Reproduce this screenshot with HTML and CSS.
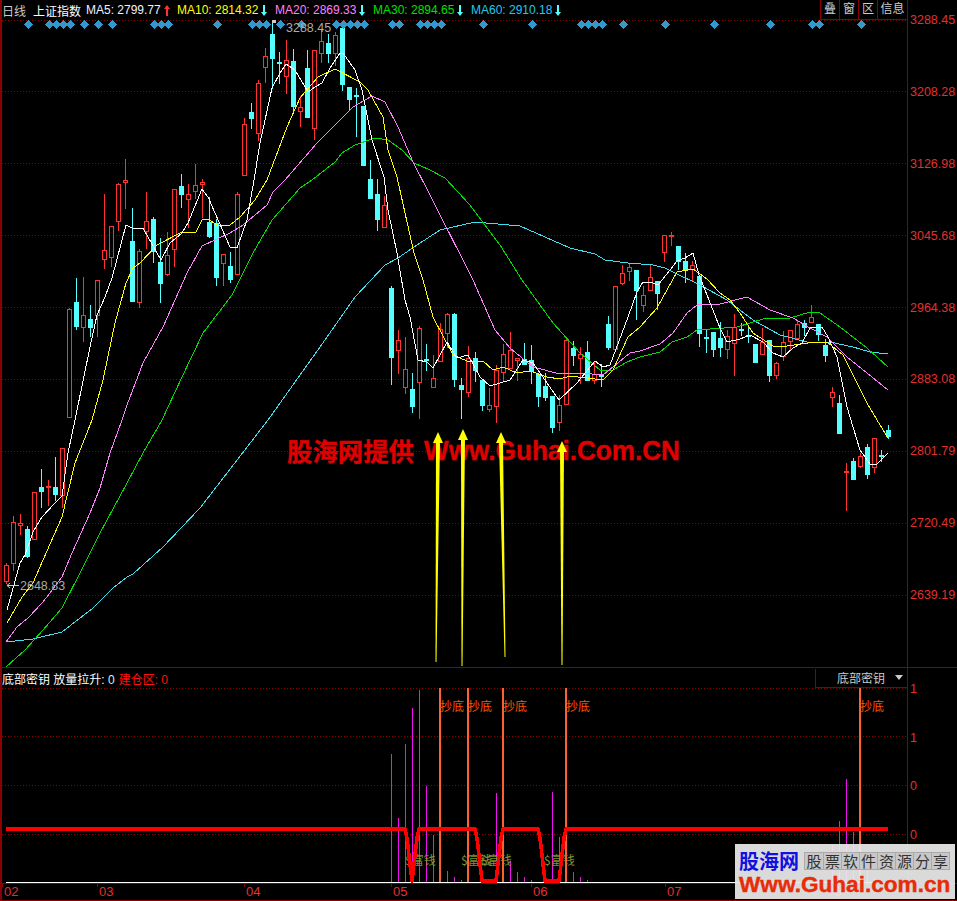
FILE: index.html
```html
<!DOCTYPE html>
<html lang="zh">
<head>
    <title>上证指数 日线</title>
    <meta charset="UTF-8">
    <link rel="stylesheet" href="styles.css">
</head>
<body>
  <div class="terminal">

    <div class="price-panel">
      <div class="title-bar">
        <span class="period">日线</span>
        <span class="symbol">上证指数</span>
        <span class="ma ma5">MA5: 2799.77<svg class="trend" viewBox="0 0 6 11"><path class="up" d="M3 0 L6 4 H4 V11 H2 V4 H0 Z"/></svg></span>
        <span class="ma ma10">MA10: 2814.32<svg class="trend" viewBox="0 0 6 11"><path class="down" d="M2 0 H4 V7 H6 L3 11 L0 7 H2 Z"/></svg></span>
        <span class="ma ma20">MA20: 2869.33<svg class="trend" viewBox="0 0 6 11"><path class="down" d="M2 0 H4 V7 H6 L3 11 L0 7 H2 Z"/></svg></span>
        <span class="ma ma30">MA30: 2894.65<svg class="trend" viewBox="0 0 6 11"><path class="down" d="M2 0 H4 V7 H6 L3 11 L0 7 H2 Z"/></svg></span>
        <span class="ma ma60">MA60: 2910.18<svg class="trend" viewBox="0 0 6 11"><path class="down" d="M2 0 H4 V7 H6 L3 11 L0 7 H2 Z"/></svg></span>
        <div class="tool-buttons">
          <span class="tool">叠</span>
          <span class="tool">窗</span>
          <span class="tool">区</span>
          <span class="tool wide">信息</span>
        </div>
      </div>
      <svg id="priceChart" class="chart" width="905" height="647" viewBox="2 20 905 647"></svg>
    </div>

    <div class="price-axis">
      <span>3288.45</span>
      <span>3208.28</span>
      <span>3126.98</span>
      <span>3045.68</span>
      <span>2964.38</span>
      <span>2883.08</span>
      <span>2801.79</span>
      <span>2720.49</span>
      <span>2639.19</span>
    </div>

    <div class="signal-panel">
      <div class="sub-bar">
        <span>底部密钥 放量拉升: <b class="zero">0</b></span>
        <span class="red">建仓区: 0</span>
        <div class="indicator-select">
          <span>底部密钥</span>
          <i class="caret"></i>
        </div>
      </div>
      <svg id="signalChart" class="chart" width="905" height="195" viewBox="2 688 905 195"></svg>
    </div>

    <div class="signal-axis">
      <span>1</span>
      <span>1</span>
      <span>0</span>
      <span>0</span>
    </div>

    <svg id="dateAxis" class="date-axis" width="955" height="16" viewBox="2 884 955 16"></svg>

  </div>

  <div class="site-badge">
    <div class="badge-top">
      <span class="badge-name">股海网</span>
      <div class="badge-cells">
        <span>股</span><span>票</span><span>软</span><span>件</span><span>资</span><span>源</span><span>分</span><span>享</span>
      </div>
    </div>
    <div class="badge-url">Www.Guhai.com.cn</div>
  </div>

  <script src="chart.js"></script>
</body>
</html>
```

FILE: styles.css
```css
* {
    box-sizing: border-box;
}

html, body {
    margin: 0;
    padding: 0;
    background-color: black;
}

body {
    position: relative;
    width: 957px;
    height: 901px;
    overflow: hidden;
    font-family: "Liberation Sans", "Noto Sans CJK SC", sans-serif;
    font-size: 12px;
}

.terminal {
    width: 957px;
    height: 901px;
    border-left: 2px solid #8b0000;
    display: grid;
    grid-template-columns: 905px 50px;
    grid-template-rows: 667px 216px 18px;
}

.chart {
    display: block;
}

/* top panel */
.title-bar {
    height: 20px;
    display: flex;
    align-items: center;
    white-space: nowrap;
    font-size: 12px;
}

.period {
    color: #ccc;
    font-size: 12px;
    width: 31px;
}

.symbol {
    color: white;
    width: 53px;
}

.ma {
    width: 98px;
    display: flex;
    align-items: center;
}

.ma5 { color: #f0f0ff; width: 91px; }
.ma10 { color: #ffff00; }
.ma20 { color: #ff80ff; }
.ma30 { color: #00e000; }
.ma60 { color: #20c8f0; }

.trend {
    width: 6px;
    height: 11px;
    margin-left: 3px;
}

.trend .up { fill: #ff3232; }
.trend .down { fill: #54ffff; }

.tool-buttons {
    margin-left: auto;
    display: flex;
    height: 20px;
    border-bottom: 1px solid #8b0000;
}

.tool {
    width: 19px;
    border-left: 1px solid #8b0000;
    color: #ccc;
    font-size: 12px;
    line-height: 19px;
    text-align: center;
}

.tool.wide {
    width: 30px;
}

.price-axis {
    border-left: 1px solid #8b0000;
    padding: 13px 0 0 2px;
    display: flex;
    flex-direction: column;
    gap: 57.9px;
    color: #e03030;
    font-size: 12.5px;
    line-height: 14px;
}

/* bottom panel */
.signal-panel {
    border-top: 1px solid #8b0000;
}

.sub-bar {
    height: 20px;
    display: flex;
    align-items: center;
    gap: 4px;
    color: white;
    white-space: nowrap;
}

.sub-bar .zero {
    color: #d8ecff;
    font-weight: normal;
}

.red {
    color: #ff1010;
}

.indicator-select {
    margin-left: auto;
    width: 92px;
    height: 19px;
    border-left: 1px solid #8b0000;
    border-bottom: 1px solid #8b0000;
    display: flex;
    align-items: center;
    justify-content: flex-end;
    gap: 10px;
    padding-right: 4px;
    color: #ccc;
}

.caret {
    width: 0;
    height: 0;
    border-left: 4px solid transparent;
    border-right: 4px solid transparent;
    border-top: 5px solid #ccc;
}

.signal-axis {
    border-top: 1px solid #8b0000;
    border-left: 1px solid #8b0000;
    padding: 14px 0 0 2px;
    display: flex;
    flex-direction: column;
    gap: 34.67px;
    color: #e03030;
    font-size: 12.5px;
    line-height: 14px;
}

.date-axis {
    grid-column: 1 / 3;
    display: block;
    width: 955px;
    height: 18px;
    border-top: 1px solid #8b0000;
    border-bottom: 1px solid #8b0000;
}

/* svg text */
.date-text {
    fill: #e03030;
    font-size: 13px;
}

.mark-text {
    fill: #aaa;
    font-size: 12.5px;
}

.watermark {
    fill: #e00000;
    stroke: #e00000;
    stroke-width: 0.3px;
    font-size: 25.4px;
    font-weight: bold;
    font-family: "Noto Sans CJK SC", sans-serif;
}

.watermark-url {
    fill: #e00000;
    stroke: #e00000;
    stroke-width: 0.3px;
    font-size: 27px;
    font-weight: bold;
}

.buy-text {
    fill: #ff5000;
    font-size: 12px;
    font-family: "Noto Sans CJK SC", sans-serif;
}

.money-text {
    fill: #7f9030;
    font-size: 12px;
    font-family: "Noto Sans CJK SC", sans-serif;
}

/* logo over the corner */
.site-badge {
    position: absolute;
    left: 735px;
    top: 844px;
    width: 220px;
    height: 55px;
    padding: 5px 4px 0 4px;
    background-color: rgba(235, 235, 235, 0.93);
}

.badge-top {
    display: flex;
    align-items: center;
    justify-content: space-between;
}

.badge-name {
    color: #1010e0;
    font-size: 20px;
    font-weight: bold;
    line-height: 24px;
    font-family: "Noto Sans CJK SC", sans-serif;
}

.badge-cells {
    display: flex;
    background-color: #c8c8c8;
    border: 1px solid #aaa;
    margin-right: 1px;
}

.badge-cells span {
    width: 18px;
    height: 16px;
    line-height: 16px;
    border-left: 1px solid #aaa;
    text-align: center;
    color: #333;
    font-size: 15px;
    font-family: "Noto Sans CJK SC", sans-serif;
}

.badge-cells span:first-child {
    border-left: none;
}

.badge-url {
    color: #e82c08;
    font-size: 22.6px;
    font-weight: bold;
    line-height: 22px;
    margin-top: 1px;
    -webkit-text-stroke: 0.4px #e82c08;
}
```

FILE: chart.js
```javascript
const SVG_NS = "http://www.w3.org/2000/svg";

// kind, high, body top, body bottom, low (all in pixel rows), one candle every 7px from x=6
const candles = [
  ["r",563,565,581,583],["r",516,522,563,570],["r",514,523,525,534],["c",526,529,556,557],
  ["r",492,492,539,539],["c",469,487,491,507],["r",480,486,487,505],["c",457,487,494,500],
  ["r",448,448,495,507],["r",308,309,417,417],["c",278,302,326,329],["r",277,315,327,341],
  ["c",305,319,327,336],["r",280,280,315,336],["r",194,250,259,268],["r",226,226,257,266],
  ["r",183,184,221,230],["r",159,180,182,208],["c",208,241,301,301],["r",249,251,302,307],
  ["r",192,221,231,248],["c",217,219,251,262],["c",238,262,283,302],["r",232,255,274,275],
  ["r",189,189,249,266],["c",174,186,194,207],["r",184,194,199,227],["r",164,185,191,198],
  ["r",179,182,184,217],["c",197,222,236,237],["c",219,223,277,285],["r",254,254,263,285],
  ["c",252,266,279,282],["r",192,194,274,274],["r",118,124,175,175],["c",103,112,118,128],
  ["r",80,83,133,140],["r",48,56,67,82],["c",20,34,58,88],["c",52,62,63,83],
  ["r",40,60,76,93],["c",49,61,106,110],["r",96,107,111,126],["c",50,68,117,117],
  ["r",50,50,128,139],["r",30,41,53,62],["c",34,43,53,62],["r",32,35,53,65],
  ["c",28,28,84,90],["c",87,87,99,109],["c",88,95,96,136],["c",106,106,165,165],
  ["c",160,179,198,198],["c",179,194,219,230],["r",196,205,227,227],["c",286,288,357,384],
  ["r",330,340,350,373],["r",337,369,387,393],["c",373,389,406,412],["r",326,328,382,418],
  ["c",344,359,360,370],["r",355,378,387,387],["r",323,329,361,361],["r",313,314,333,347],
  ["c",313,314,379,386],["c",378,385,389,418],["r",346,358,392,396],["c",352,358,370,381],
  ["c",380,380,405,410],["r",388,405,409,411],["r",365,370,406,422],["r",344,354,372,380],
  ["r",332,350,368,368],["r",358,358,360,380],["c",343,359,364,364],["c",345,360,371,383],
  ["c",374,374,396,406],["c",373,386,397,400],["c",396,396,427,432],["r",395,405,422,430],
  ["r",339,340,404,404],["c",341,348,355,365],["r",347,354,358,383],["c",341,352,380,380],
  ["r",362,374,380,383],["c",364,375,376,386],["c",316,324,347,349],["r",286,286,349,349],
  ["r",265,273,283,284],["r",263,267,271,280],["c",270,270,290,319],["r",286,295,305,311],
  ["r",265,277,290,290],["c",281,281,293,309],["r",235,235,252,261],["r",232,235,236,245],
  ["c",246,246,261,269],["c",253,261,269,282],["r",261,265,269,280],["c",276,276,333,346],
  ["c",330,337,338,352],["c",332,332,349,356],["c",322,338,347,356],["r",330,336,349,358],
  ["r",314,327,343,375],["c",323,329,330,335],["c",326,335,336,342],["c",344,344,362,362],
  ["r",328,342,354,354],["c",340,340,375,381],["r",362,363,375,378],["r",331,342,356,360],
  ["r",330,330,341,349],["r",320,324,338,338],["c",320,323,327,335],["r",305,317,322,322],
  ["c",324,324,334,340],["c",339,345,355,361],["r",387,392,397,406],["c",395,403,433,433],
  ["r",463,471,472,510],["c",458,461,479,479],["r",453,456,466,467],["c",444,447,474,478],
  ["r",438,438,467,472],["c",450,455,456,461],["c",425,430,436,438]
];

const maLines = [
  { color: "#40e0f0", points: "6,642 33,639 62,632 93,608 113,588 127,577 133,574 163,547 200,508 268,420 320,347 355,297 385,265 398,258 414,247 440,230 475,222 520,226 570,248 595,254 605,260 628,263 653,265 665,268 673,272 700,285 727,300 753,320 780,335 807,342 830,342 853,347 870,352 888,354" },
  { color: "#00e000", points: "6,667 25,650 43,630 62,608 80,573 100,533 127,483 143,453 162,420 182,377 203,333 232,295 253,253 272,220 300,188 312,180 335,162 342,153 355,145 375,138 388,140 402,150 414,163 430,170 445,178 470,205 500,245 522,280 553,323 580,353 600,370 613,370 627,362 640,357 660,352 672,342 687,337 697,330 737,327 763,319 790,318 810,312 820,313 840,327 867,348 888,367" },
  { color: "#ff80ff", points: "6,642 17,627 28,618 43,602 62,577 72,553 90,513 100,488 110,453 122,420 127,405 143,363 163,327 187,273 202,246 230,233 243,225 267,205 273,192 285,180 317,143 337,123 353,107 372,96 385,102 398,127 413,162 430,195 473,280 495,330 510,348 533,367 560,374 580,373 603,375 630,353 640,351 660,344 673,333 687,313 697,305 720,304 747,297 770,310 793,318 810,328 827,337 847,357 867,373 888,390" },
  { color: "#ffff00", points: "7,623 22,597 33,583 43,560 62,517 75,463 92,420 103,380 115,323 126,283 133,268 140,263 157,245 182,232 196,232 202,220 208,219 217,225 230,225 240,217 255,200 267,180 287,127 300,98 318,77 335,69 360,82 368,90 383,117 388,150 397,177 405,213 414,253 423,280 433,317 453,355 467,361 483,361 493,370 503,367 517,373 530,371 547,377 560,379 570,376 603,380 613,370 628,337 640,327 657,308 677,272 693,269 707,279 720,293 730,300 740,313 753,333 773,346 787,346 815,342 827,342 843,355 867,403 877,420 888,438" },
  { color: "#ffffff", points: "7,610 20,563 25,555 33,532 42,517 55,503 62,496 68,453 75,420 90,347 97,315 105,297 112,278 126,225 132,228 143,228 148,237 161,260 170,243 182,233 188,223 202,189 208,197 230,247 237,248 247,220 254,180 260,143 272,88 280,73 286,64 295,70 308,92 315,87 322,83 330,68 340,53 343,53 355,70 362,90 372,140 384,177 388,210 397,253 405,300 410,317 418,360 427,362 433,368 447,342 457,358 468,355 480,377 490,386 500,383 510,380 523,360 533,363 547,383 559,400 577,383 595,361 603,367 610,365 628,317 637,292 643,282 650,282 658,285 670,270 677,261 685,258 693,253 699,275 707,295 720,328 727,342 740,339 750,335 763,342 773,353 783,357 793,348 802,343 810,328 822,327 828,337 837,357 847,407 860,450 870,464 877,464 888,453" }
];

const diamonds = [28,49,56,63,70,84,98,112,154,161,168,217,252,259,266,280,301,336,343,350,357,364,392,399,420,427,434,441,483,532,581,588,595,602,623,665,714,770,812,819,861];

// x, top of the magenta bars in the bottom panel
const volumeBars = [[391,754],[398,818],[405,744],[412,708],[419,690],[426,786],[433,835],[447,871],[454,877],[461,880],[496,793],[510,861],[517,872],[524,877],[531,880],[552,792],[559,837],[573,872],[580,877],[587,880],[832,845],[839,821],[846,779],[853,832],[867,870],[874,877]];

function add(parent, tag, attrs, text) {
    const el = document.createElementNS(SVG_NS, tag);
    for (const name in attrs) {
        el.setAttribute(name, attrs[name]);
    }
    if (text) {
        el.textContent = text;
    }
    parent.appendChild(el);
    return el;
}

function gridLine(svg, y, x2) {
    add(svg, "line", { x1: 2, y1: y + 0.5, x2: x2, y2: y + 0.5, stroke: "#8b0000", "stroke-dasharray": "1 2" });
}

function yellowArrow(svg, tipX, tipY, endX, endY) {
    const shaft = [tipX - 2, tipY + 9, tipX + 2, tipY + 9, endX + 0.5, endY, endX - 0.5, endY];
    const head = [tipX, tipY, tipX + 5, tipY + 11, tipX - 5, tipY + 11];
    add(svg, "polygon", { points: shaft.join(" "), fill: "#ffff00" });
    add(svg, "polygon", { points: head.join(" "), fill: "#ffff00" });
}

function drawPriceChart() {
    const svg = document.getElementById("priceChart");
    [20, 91, 163, 235, 307, 379, 451, 523, 595].forEach(y => gridLine(svg, y, 907));

    candles.forEach((c, i) => {
        const x = 6 + i * 7;
        const color = c[0] === "r" ? "#ff3232" : "#54ffff";
        add(svg, "rect", { x: x, y: c[1], width: 1, height: c[4] - c[1] + 1, fill: color, "shape-rendering": "crispEdges" });
        if (c[0] === "r") {
            add(svg, "rect", { x: x - 1.5, y: c[2] + 0.5, width: 4, height: Math.max(c[3] - c[2], 1), fill: "black", stroke: color, "shape-rendering": "crispEdges" });
        } else {
            add(svg, "rect", { x: x - 2, y: c[2], width: 5, height: c[3] - c[2] + 1, fill: color, "shape-rendering": "crispEdges" });
        }
    });

    maLines.forEach(ma => {
        add(svg, "polyline", { points: ma.points, fill: "none", stroke: ma.color, "stroke-width": 1, "shape-rendering": "crispEdges" });
    });

    diamonds.forEach(x => {
        add(svg, "polygon", { points: `${x - 4.5},24.5 ${x},20 ${x + 4.5},24.5 ${x},29`, fill: "#3399cc", "shape-rendering": "crispEdges" });
    });

    add(svg, "rect", { x: 272, y: 20, width: 4, height: 3, fill: "#ccc" });
    add(svg, "text", { x: 286, y: 32, class: "mark-text" }, "3288.45");
    add(svg, "path", { d: "M7 585.5 H19 M7 585.5 L10 583 M7 585.5 L10 588", stroke: "#ccc", fill: "none" });
    add(svg, "text", { x: 20, y: 590, class: "mark-text" }, "2648.83");

    add(svg, "text", { x: 287, y: 461, class: "watermark" }, "股海网提供");
    add(svg, "text", { x: 424, y: 460, class: "watermark-url", textLength: 256, lengthAdjust: "spacingAndGlyphs" }, "Www.Guhai.Com.CN");

    yellowArrow(svg, 438, 432, 436, 662);
    yellowArrow(svg, 463, 429, 462, 666);
    yellowArrow(svg, 501, 432, 505, 657);
    yellowArrow(svg, 562, 441, 562, 665);
}

function drawSignalChart() {
    const svg = document.getElementById("signalChart");
    [688, 736, 785, 834].forEach(y => gridLine(svg, y, 907));

    add(svg, "rect", { x: 6, y: 882, width: 882, height: 1, fill: "white" });

    volumeBars.forEach(b => {
        add(svg, "rect", { x: b[0], y: b[1], width: 1, height: 882 - b[1], fill: "#f010f0" });
    });

    [405, 461, 481, 544].forEach(x => {
        add(svg, "text", { x: x, y: 865, class: "money-text" }, "$富钱");
    });

    [440, 468, 503, 566, 860].forEach(x => {
        add(svg, "rect", { x: x - 1, y: 688, width: 2, height: 194, fill: "#ff6030" });
        add(svg, "text", { x: x, y: 711, class: "buy-text" }, "抄底");
    });

    add(svg, "polyline", {
        points: "6,829 405,829 407,838 412,881 417,838 419,829 475,829 477,838 482,881 496,881 501,838 503,829 538,829 540,838 545,881 559,881 564,838 566,829 888,829",
        fill: "none", stroke: "#ff0000", "stroke-width": 3.6, "stroke-linejoin": "round", "shape-rendering": "crispEdges"
    });
}

function drawDateAxis() {
    const svg = document.getElementById("dateAxis");
    [["02", 2], ["03", 97], ["04", 244], ["05", 391], ["06", 531], ["07", 665], ["08", 825]].forEach(d => {
        add(svg, "rect", { x: d[1], y: 884, width: 1, height: 3, fill: "#8b0000" });
        add(svg, "text", { x: d[1] + 2, y: 896, class: "date-text" }, d[0]);
    });
}

drawPriceChart();
drawSignalChart();
drawDateAxis();
```
